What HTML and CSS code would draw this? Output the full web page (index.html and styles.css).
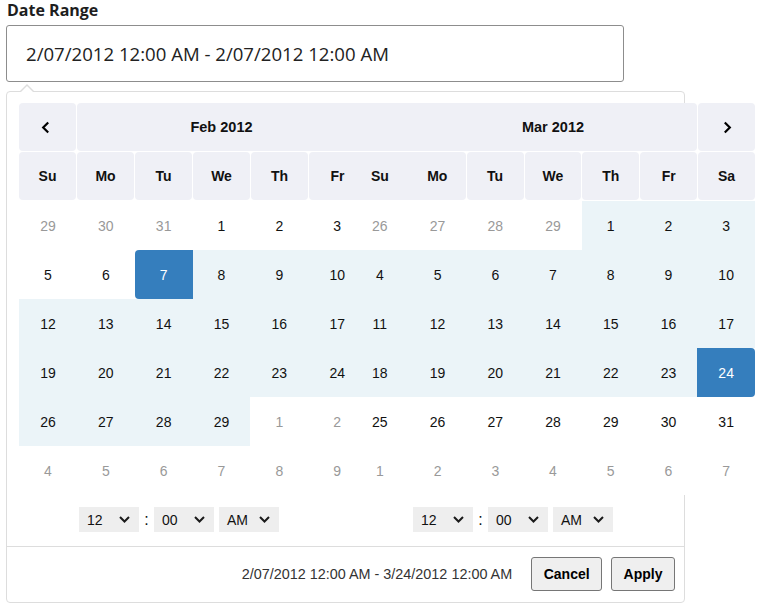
FILE: index.html
```html
<!DOCTYPE html>
<html lang="en">
<head>
<meta charset="utf-8">
<title>Date Range</title>
<link rel="stylesheet" href="styles.css">
</head>
<body>
<div class="page">
  <label class="lbl">Date Range</label>
  <div class="field">2/07/2012 12:00 AM - 2/07/2012 12:00 AM</div>

  <div class="drp">
    <div class="cals">
      <div class="cal cal-l">
        <div class="tbl">
          <div class="hrow">
            <div class="nav prev"><svg width="9" height="13" viewBox="0 0 9 13"><path d="M7.2 1.5L2.2 6.5l5 5" fill="none" stroke="#000" stroke-width="2.2"/></svg></div>
            <div class="month">Feb 2012</div>
            <div class="empty"></div>
          </div>
          <div class="hrow">
            <div>Su</div><div>Mo</div><div>Tu</div><div>We</div><div>Th</div><div>Fr</div><div>Sa</div>
          </div>
          <div class="days">
            <div class="off">29</div><div class="off">30</div><div class="off">31</div><div>1</div><div>2</div><div>3</div><div>4</div>
            <div>5</div><div>6</div><div class="start">7</div><div class="in">8</div><div class="in">9</div><div class="in">10</div><div class="in">11</div>
            <div class="in">12</div><div class="in">13</div><div class="in">14</div><div class="in">15</div><div class="in">16</div><div class="in">17</div><div class="in">18</div>
            <div class="in">19</div><div class="in">20</div><div class="in">21</div><div class="in">22</div><div class="in">23</div><div class="in">24</div><div class="in">25</div>
            <div class="in">26</div><div class="in">27</div><div class="in">28</div><div class="in">29</div><div class="off">1</div><div class="off">2</div><div class="off">3</div>
            <div class="off">4</div><div class="off">5</div><div class="off">6</div><div class="off">7</div><div class="off">8</div><div class="off">9</div><div class="off">10</div>
          </div>
        </div>
        <div class="time">
          <div class="sel"><span>12</span><svg width="11" height="7" viewBox="0 0 11 7"><path d="M1 1l4.5 4.5L10 1" fill="none" stroke="#1a1a1a" stroke-width="2"/></svg></div>
          <span class="colon">:</span>
          <div class="sel"><span>00</span><svg width="11" height="7" viewBox="0 0 11 7"><path d="M1 1l4.5 4.5L10 1" fill="none" stroke="#1a1a1a" stroke-width="2"/></svg></div>
          <div class="sel gap"><span>AM</span><svg width="11" height="7" viewBox="0 0 11 7"><path d="M1 1l4.5 4.5L10 1" fill="none" stroke="#1a1a1a" stroke-width="2"/></svg></div>
        </div>
      </div>

      <div class="cal cal-r">
        <div class="tbl">
          <div class="hrow">
            <div class="empty first"></div>
            <div class="month">Mar 2012</div>
            <div class="nav next"><svg width="9" height="13" viewBox="0 0 9 13"><path d="M1.8 1.5l5 5-5 5" fill="none" stroke="#000" stroke-width="2.2"/></svg></div>
          </div>
          <div class="hrow">
            <div class="first">Su</div><div>Mo</div><div>Tu</div><div>We</div><div>Th</div><div>Fr</div><div>Sa</div>
          </div>
          <div class="days">
            <div class="off">26</div><div class="off">27</div><div class="off">28</div><div class="off">29</div><div class="in">1</div><div class="in">2</div><div class="in">3</div>
            <div class="in">4</div><div class="in">5</div><div class="in">6</div><div class="in">7</div><div class="in">8</div><div class="in">9</div><div class="in">10</div>
            <div class="in">11</div><div class="in">12</div><div class="in">13</div><div class="in">14</div><div class="in">15</div><div class="in">16</div><div class="in">17</div>
            <div class="in">18</div><div class="in">19</div><div class="in">20</div><div class="in">21</div><div class="in">22</div><div class="in">23</div><div class="end">24</div>
            <div>25</div><div>26</div><div>27</div><div>28</div><div>29</div><div>30</div><div>31</div>
            <div class="off">1</div><div class="off">2</div><div class="off">3</div><div class="off">4</div><div class="off">5</div><div class="off">6</div><div class="off">7</div>
          </div>
        </div>
        <div class="time">
          <div class="sel"><span>12</span><svg width="11" height="7" viewBox="0 0 11 7"><path d="M1 1l4.5 4.5L10 1" fill="none" stroke="#1a1a1a" stroke-width="2"/></svg></div>
          <span class="colon">:</span>
          <div class="sel"><span>00</span><svg width="11" height="7" viewBox="0 0 11 7"><path d="M1 1l4.5 4.5L10 1" fill="none" stroke="#1a1a1a" stroke-width="2"/></svg></div>
          <div class="sel gap"><span>AM</span><svg width="11" height="7" viewBox="0 0 11 7"><path d="M1 1l4.5 4.5L10 1" fill="none" stroke="#1a1a1a" stroke-width="2"/></svg></div>
        </div>
      </div>
    </div>

    <div class="foot">
      <span class="sum">2/07/2012 12:00 AM - 3/24/2012 12:00 AM</span>
      <button class="btn" type="button">Cancel</button>
      <button class="btn gap-btn" type="button">Apply</button>
    </div>
  </div>
</div>
</body>
</html>
```

FILE: styles.css
```css
* {
  box-sizing: border-box;
}

body {
  margin: 0;
  background: #fff;
  font-family: "Liberation Sans", Arial, sans-serif;
  color: #000;
}

.page {
  padding: 1px 0 0 6px;
}

.lbl {
  display: block;
  margin: 0 0 6px 1px;
  font: 700 16px/18px "Open Sans", sans-serif;
  color: #1e1e1e;
}

.field {
  width: 618px;
  height: 57px;
  border: 1px solid #8d8d8d;
  border-radius: 3px;
  padding-left: 19px;
  display: flex;
  align-items: center;
  font: 400 18.6px "Open Sans", sans-serif;
  color: #222;
}

.drp {
  position: relative;
  margin-top: 9px;
  width: 679px;
  border: 1px solid #ddd;
  border-radius: 4px;
  background: #fff;
}

.drp::before,
.drp::after {
  content: "";
  position: absolute;
  border-left: 7px solid transparent;
  border-right: 7px solid transparent;
  border-bottom: 7px solid #ddd;
  top: -8px;
  left: 13px;
}

.drp::after {
  border-left-width: 6px;
  border-right-width: 6px;
  border-bottom: 6px solid #fff;
  top: -6px;
  left: 14px;
}

.cals {
  display: flex;
  padding-top: 11px;
}

.cal {
  flex: none;
  position: relative;
}

.cal-l {
  width: 344px;
}

.cal-r {
  width: 324px;
}

.tbl {
  width: 405px;
}

.cal-l .tbl {
  margin-left: 12px;
}

.cal-r .tbl {
  width: 404px;
  background: #fff;
}

.hrow {
  display: grid;
  grid-template-columns: repeat(7, 1fr);
  column-gap: 1px;
  height: 48px;
  margin-bottom: 1px;
}

.hrow > div {
  background: #eff0f6;
  border-radius: 4px;
  display: flex;
  align-items: center;
  justify-content: center;
  font-weight: 700;
  font-size: 14px;
  color: #111;
}

.hrow .month {
  grid-column: span 5;
  font-size: 14.5px;
}

.hrow .prev {
  padding-right: 4px;
}

.hrow .next {
  padding-left: 2px;
}

.cal-r .hrow .first {
  margin-right: -1px;
  border-radius: 0;
}

.cal-r .hrow .first + div {
  border-top-left-radius: 0;
  border-bottom-left-radius: 0;
}

.days {
  display: grid;
  grid-template-columns: repeat(7, 1fr);
  grid-auto-rows: 49px;
}

.days > div {
  display: flex;
  align-items: center;
  justify-content: center;
  font-size: 14px;
  color: #111;
}

.days > .off {
  color: #999;
}

.days > .in {
  background: #ebf4f8;
}

.days > .start,
.days > .end {
  background: #357ebd;
  color: #fff;
}

.days > .start {
  border-radius: 4px 0 0 4px;
}

.days > .end {
  border-radius: 0 4px 4px 0;
}

.time {
  display: flex;
  justify-content: center;
  align-items: center;
  margin: 12px 0 14px;
}

.sel {
  width: 60px;
  height: 25px;
  background: #eee;
  display: flex;
  align-items: center;
  justify-content: space-between;
  padding: 0 9px 0 8px;
  font-size: 14px;
  color: #111;
}

.sel.gap {
  margin-left: 5px;
}

.colon {
  width: 15px;
  text-align: center;
  font-size: 16px;
  color: #111;
}

.foot {
  border-top: 1px solid #ddd;
  display: flex;
  justify-content: flex-end;
  align-items: center;
  padding: 10px 9px 11px 0;
}

.sum {
  font-size: 14.4px;
  color: #333;
  margin-right: 19px;
}

.btn {
  height: 34px;
  padding: 0 11.5px;
  border: 1px solid #767676;
  border-radius: 3px;
  background: #efefef;
  font: 700 14px "Liberation Sans", Arial, sans-serif;
  color: #000;
}

.btn.gap-btn {
  margin-left: 9px;
}
```
